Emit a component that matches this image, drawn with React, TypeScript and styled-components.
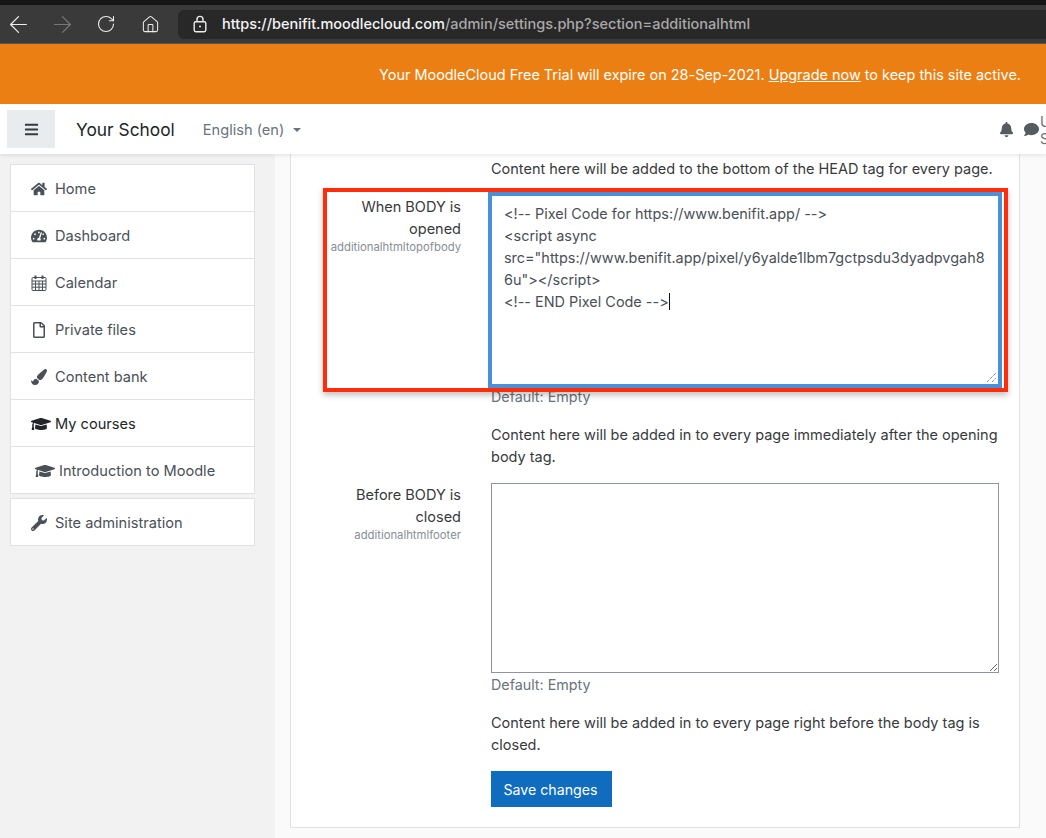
import styled, { createGlobalStyle } from 'styled-components';
import { ArrowLeft, ArrowRight, House, RotateCw } from 'lucide-react';
import {
  FaBars,
  FaBell,
  FaComment,
  FaGraduationCap,
  FaHome,
  FaPaintBrush,
  FaRegFile,
  FaTachometerAlt,
  FaWrench,
} from 'react-icons/fa';

const GlobalStyle = createGlobalStyle`
  * {
    box-sizing: border-box;
  }

  body {
    margin: 0;
    background: #fafafa;
    font-family: Inter, "Liberation Sans", sans-serif;
    font-size: 14.5px;
    font-feature-settings: "calt" 0;
    line-height: 22px;
    color: #373a3c;
  }
`;

const Page = styled.div`
  display: flex;
  flex-direction: column;
  width: 1046px;
  height: 838px;
  overflow: hidden;
`;

const BrowserBar = styled.div`
  display: flex;
  align-items: center;
  flex: none;
  height: 44px;
  padding-left: 9px;
  background: #3a3a3a;
  border-top: 5px solid #161616;
  border-bottom: 1px solid #555;
`;

const NavButton = styled.span<{ $dim?: boolean }>`
  display: flex;
  justify-content: center;
  width: 18px;
  margin-right: 26px;
  color: ${(props) => (props.$dim ? '#777' : '#ececec')};

  svg {
    flex: none;
  }
`;

const UrlField = styled.div`
  display: flex;
  flex: 1;
  align-items: center;
  height: 29px;
  margin-left: -7px;
  padding-left: 14px;
  background: #282828;
  border-radius: 6px 0 0 6px;
  color: #ececec;
`;

const Url = styled.span`
  margin-left: 14px;
  font-size: 14.5px;
  font-weight: 500;
  color: #a9a9a9;

  b {
    font-weight: 500;
    color: #f4f4f4;
  }
`;

const TrialBanner = styled.div`
  flex: none;
  height: 60px;
  padding: 20px 25px 0 0;
  background: #ec7f13;
  color: #fff;
  text-align: right;
  font-size: 14.45px;

  a {
    color: inherit;
    text-decoration: underline;
  }
`;

const TopNav = styled.div`
  position: relative;
  z-index: 2;
  display: flex;
  align-items: center;
  flex: none;
  height: 50px;
  padding-left: 7px;
  background: #fff;
  box-shadow: 0 2px 4px rgba(0, 0, 0, 0.08);
  overflow: hidden;
`;

const MenuToggle = styled.div`
  display: flex;
  align-items: center;
  justify-content: center;
  width: 48px;
  height: 38px;
  background: #e9ecef;
  color: #343a40;
  font-size: 15px;
`;

const Brand = styled.div`
  margin: 1px 0 0 21px;
  font-size: 17.35px;
  color: #212529;
`;

const Language = styled.div`
  display: flex;
  align-items: center;
  margin: 1px 0 0 28px;
  font-size: 14.6px;
  color: #6a737b;

  &::after {
    content: '';
    margin-left: 9px;
    border-top: 4.5px solid #6a737b;
    border-left: 4.5px solid transparent;
    border-right: 4.5px solid transparent;
  }
`;

const UserArea = styled.div`
  display: flex;
  align-items: center;
  flex: none;
  width: 47px;
  margin-left: auto;
  color: #555b61;
  font-size: 15px;
`;

const UserName = styled.div`
  width: 7px;
  margin: 2px 0 0 1px;
  font-size: 14px;
  line-height: 17px;
  color: #6a737b;
`;

const NavIcon = styled.span`
  display: flex;
  margin-right: 10px;

  &:last-of-type {
    margin-right: 0;
  }
`;

const Body = styled.div`
  display: flex;
  flex: 1;
  min-height: 0;
`;

const Sidebar = styled.aside`
  display: flex;
  flex-direction: column;
  gap: 4px;
  flex: none;
  width: 275px;
  padding: 10px 20px 0 10px;
  background: #f2f2f2;
`;

const NavGroup = styled.div`
  background: #fff;
  border: 1px solid #dee2e6;
`;

const NavItem = styled.div<{ $strong?: boolean; $indent?: boolean }>`
  display: flex;
  align-items: center;
  box-sizing: content-box;
  height: 45px;
  padding: 1px 0 0 ${(props) => (props.$indent ? '24px' : '20px')};
  font-size: 14.6px;
  color: ${(props) => (props.$strong ? '#212529' : '#495057')};

  &:not(:last-child) {
    border-bottom: 1px solid #dee2e6;
  }
`;

const NavGlyph = styled.span<{ $wide?: boolean }>`
  display: flex;
  flex: none;
  width: 18px;
  margin-right: 6px;
  font-size: ${(props) => (props.$wide ? '20px' : '16px')};

  svg {
    flex: none;
  }
`;

const Main = styled.main`
  flex: 1;
  padding: 0 26px 10px 15px;
`;

const Card = styled.div`
  height: 100%;
  padding: 4px 20px 0 0;
  background: #fff;
  border: 1px solid #dee2e6;
  border-top: 0;
`;

const SettingRow = styled.div`
  position: relative;
  display: grid;
  grid-template-columns: 170px 508px;
  column-gap: 30px;
`;

const Label = styled.div`
  padding: 1px 0 0 30px;
  text-align: right;
  color: #373a3c;
`;

const SettingKey = styled.div`
  margin: 0 0 0 -10px;
  font-size: 11.3px;
  line-height: 14px;
  color: #868e96;
`;

const Field = styled.div`
  grid-column: 2;
`;

const Note = styled.p`
  margin: 0;
  color: #373a3c;
`;

const FirstNote = styled(Note)`
  margin-bottom: 15px;
`;

const FollowNote = styled(Note)`
  margin: 16px 0 15px;
`;

const ClosingNote = styled(Note)`
  margin-top: 16px;
`;

const DefaultValue = styled.div`
  margin-top: 1px;
  font-size: 14.3px;
  color: #6a737b;
`;

const CodeField = styled.div`
  position: relative;
  height: 190px;
  padding: 7px 12px;
  border: 1px solid #4a90d9;
  font-size: 14.45px;
  color: #495057;
  white-space: pre-wrap;
  word-break: break-all;
  background: #fff;
  box-shadow: 0 0 0 3px #4a90d9;
`;

const Caret = styled.span`
  border-right: 1px solid #111;
`;

const Grip = styled.svg`
  position: absolute;
  right: 1px;
  bottom: 1px;
`;

const EmptyField = styled.textarea`
  display: block;
  width: 100%;
  height: 190px;
  margin: 0;
  padding: 8px 13px;
  border: 1px solid #8f959e;
  border-radius: 0;
  background: #fff;
`;

const Annotation = styled.div`
  position: absolute;
  top: -7px;
  left: 32px;
  width: 685px;
  height: 204px;
  border: 4px solid #ff2d0a;
  box-shadow: 0 3px 6px rgba(0, 0, 0, 0.25);
  pointer-events: none;
`;

const SaveButton = styled.button`
  display: block;
  width: 121px;
  height: 36px;
  margin-top: 15px;
  padding: 0 2px 0 0;
  border: 0;
  background: #0f6cbf;
  color: #fff;
  font-family: inherit;
  font-size: 14.2px;
`;

const CODE =
  '<!-- Pixel Code for https://www.benifit.app/ -->\n<script async\nsrc="https://www.benifit.app/pixel/y6yalde1lbm7gctpsdu3dyadpvgah86u"></script>\n<!-- END Pixel Code -->';

const LockIcon = () => (
  <svg width="16" height="18" viewBox="0 0 16 18" fill="none" stroke="currentColor" strokeWidth="1.4">
    <rect x="2.2" y="6.7" width="11.6" height="10" rx="1.6" />
    <path d="M5 6.7V4.4a3 3 0 0 1 6 0v2.3" />
    <circle cx="8" cy="11.6" r="1" fill="currentColor" stroke="none" />
  </svg>
);

const CalendarIcon = () => (
  <svg width="16" height="16" viewBox="0 0 16 16" fill="none" stroke="currentColor" strokeWidth="1">
    <rect x="1" y="2.5" width="14" height="13" rx="1" />
    <path d="M1 6h14M1 9h14M1 12.2h14M4.5 6v9.5M8 6v9.5M11.5 6v9.5" />
    <path d="M4.5 0.5v3.5M11.5 0.5v3.5" strokeWidth="2" />
  </svg>
);

const NAV_ITEMS = [
  { label: 'Home', icon: <FaHome /> },
  { label: 'Dashboard', icon: <FaTachometerAlt /> },
  { label: 'Calendar', icon: <CalendarIcon /> },
  { label: 'Private files', icon: <FaRegFile /> },
  { label: 'Content bank', icon: <FaPaintBrush /> },
  { label: 'My courses', icon: <FaGraduationCap />, strong: true, wide: true },
  { label: 'Introduction to Moodle', icon: <FaGraduationCap />, indent: true, wide: true },
];

export default function App() {
  return (
    <Page>
      <GlobalStyle />
      <BrowserBar>
        <NavButton>
          <ArrowLeft size={27} strokeWidth={1.1} />
        </NavButton>
        <NavButton $dim>
          <ArrowRight size={27} strokeWidth={1.1} />
        </NavButton>
        <NavButton>
          <RotateCw size={20} strokeWidth={1.3} />
        </NavButton>
        <NavButton>
          <House size={19} strokeWidth={1.3} />
        </NavButton>
        <UrlField>
          <LockIcon />
          <Url>
            <b>https://benifit.moodlecloud.com</b>/admin/settings.php?section=additionalhtml
          </Url>
        </UrlField>
      </BrowserBar>

      <TrialBanner>
        Your MoodleCloud Free Trial will expire on 28-Sep-2021. <a href="#upgrade">Upgrade now</a> to keep this site
        active.
      </TrialBanner>

      <TopNav>
        <MenuToggle>
          <FaBars />
        </MenuToggle>
        <Brand>Your School</Brand>
        <Language>English (en)</Language>
        <UserArea>
          <NavIcon>
            <FaBell />
          </NavIcon>
          <NavIcon>
            <FaComment />
          </NavIcon>
          <UserName>
            U<br />S
          </UserName>
        </UserArea>
      </TopNav>

      <Body>
        <Sidebar>
          <NavGroup>
            {NAV_ITEMS.map((item) => (
              <NavItem key={item.label} $strong={item.strong} $indent={item.indent}>
                <NavGlyph $wide={item.wide}>{item.icon}</NavGlyph>
                {item.label}
              </NavItem>
            ))}
          </NavGroup>
          <NavGroup>
            <NavItem>
              <NavGlyph>
                <FaWrench />
              </NavGlyph>
              Site administration
            </NavItem>
          </NavGroup>
        </Sidebar>

        <Main>
          <Card>
            <SettingRow>
              <Field>
                <FirstNote>Content here will be added to the bottom of the HEAD tag for every page.</FirstNote>
              </Field>
            </SettingRow>

            <SettingRow>
              <Label>
                When BODY is opened
                <SettingKey>additionalhtmltopofbody</SettingKey>
              </Label>
              <Field>
                <CodeField>
                  {CODE}
                  <Caret />
                  <Grip width="11" height="11" viewBox="0 0 11 11">
                    <path d="M1 10 10 1M6 10l4-4" stroke="#555" strokeWidth="1" strokeDasharray="1 1" fill="none" />
                  </Grip>
                </CodeField>
                <DefaultValue>Default: Empty</DefaultValue>
                <FollowNote>
                  Content here will be added in to every page immediately after the opening body tag.
                </FollowNote>
              </Field>
              <Annotation />
            </SettingRow>

            <SettingRow>
              <Label>
                Before BODY is closed
                <SettingKey>additionalhtmlfooter</SettingKey>
              </Label>
              <Field>
                <EmptyField />
                <DefaultValue>Default: Empty</DefaultValue>
                <ClosingNote>Content here will be added in to every page right before the body tag is closed.</ClosingNote>
                <SaveButton>Save changes</SaveButton>
              </Field>
            </SettingRow>
          </Card>
        </Main>
      </Body>
    </Page>
  );
}
